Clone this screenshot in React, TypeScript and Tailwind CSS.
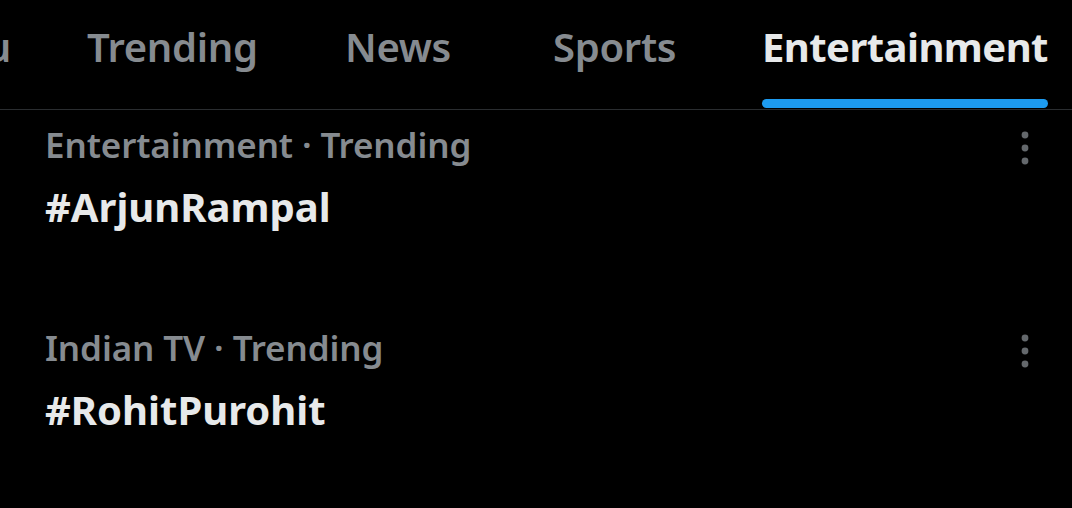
import React from 'react';

const tabs = [
  { label: 'For you', active: false, w: 'w-[87px]', pad: 'justify-end pr-[76px]' },
  { label: 'Trending', active: false, w: 'w-[258px]', pad: '' },
  { label: 'News', active: false, w: 'w-[208px]', pad: '' },
  { label: 'Sports', active: false, w: 'w-[209px]', pad: '' },
  { label: 'Entertainment', active: true, w: 'w-[310px]', pad: '' },
];

const trends = [
  { meta: 'Entertainment · Trending', tag: '#ArjunRampal' },
  { meta: 'Indian TV · Trending', tag: '#RohitPurohit' },
];

function MoreIcon() {
  return (
    <svg width="10" height="34" viewBox="0 0 10 34" className="text-[#64686c]">
      <circle cx="5" cy="4" r="3.4" fill="currentColor" />
      <circle cx="5" cy="17" r="3.4" fill="currentColor" />
      <circle cx="5" cy="30" r="3.4" fill="currentColor" />
    </svg>
  );
}

export default function App() {
  return (
    <div
      className="w-[1072px] h-[508px] bg-black overflow-hidden"
      style={{ fontFamily: '"Noto Sans", "Open Sans", sans-serif' }}
    >
      <div className="flex h-[110px] border-b-[1.5px] border-[#2a2d30]">
        {tabs.map((t) => (
          <div key={t.label} className={'flex shrink-0 ' + t.w + ' ' + t.pad}>
            <div className="flex flex-col shrink-0">
              <div
                className={
                  'pt-[23px] text-[40px] leading-[48px] whitespace-nowrap ' +
                  (t.active
                    ? 'text-[#e7e9ea] font-bold tracking-[-0.55px]'
                    : 'text-[#868b90] font-semibold tracking-[-0.3px]')
                }
              >
                {t.label}
              </div>
              <div className="flex-1" />
              {t.active ? <div className="h-[9px] rounded-full bg-[#1d9bf0] mb-px" /> : null}
            </div>
          </div>
        ))}
      </div>

      <div className="flex flex-col pl-[45px] pr-[42px] pt-[15px] gap-[97px]">
        {trends.map((t) => (
          <div key={t.tag} className="flex justify-between items-start">
            <div className="flex flex-col gap-[18px]">
              <div className="text-[35px] leading-[40px] font-semibold text-[#868b90] tracking-[-0.1px]">{t.meta}</div>
              <div className="text-[40px] leading-[48px] font-bold text-[#e7e9ea]">{t.tag}</div>
            </div>
            <div className="pt-[6px]">
              <MoreIcon />
            </div>
          </div>
        ))}
      </div>
    </div>
  );
}
